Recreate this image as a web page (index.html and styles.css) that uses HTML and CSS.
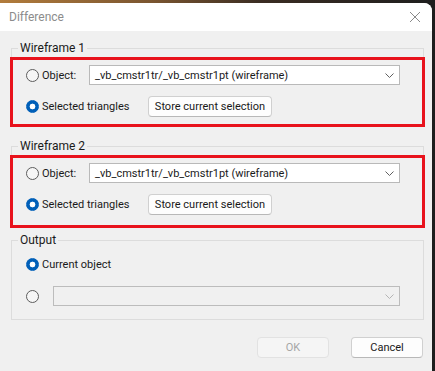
FILE: index.html
```html
<!DOCTYPE html>
<html lang="en">
<head>
    <meta charset="UTF-8">
    <title>Difference</title>
    <link rel="stylesheet" href="styles.css">
</head>
<body>

<div class="window">
    <div class="titlebar">
        <span class="title">Difference</span>
        <svg class="close" width="12" height="12" viewBox="0 0 12 12">
            <path d="M1 1 L11 11 M11 1 L1 11" stroke="#8a8a8a" stroke-width="1" fill="none"/>
        </svg>
    </div>

    <div class="dialog">
        <fieldset class="group">
            <legend>Wireframe 1</legend>
            <div class="mark">
                <div class="row">
                    <label class="radio short"><span class="dot"></span>Object:</label>
                    <div class="combo">
                        <span>_vb_cmstr1tr/_vb_cmstr1pt (wireframe)</span>
                        <svg width="9" height="5" viewBox="0 0 9 5"><path d="M0.5 0.5 L4.5 4.5 L8.5 0.5" stroke="#606060" fill="none"/></svg>
                    </div>
                </div>
                <div class="row">
                    <label class="radio long"><span class="dot on"></span>Selected triangles</label>
                    <button class="btn store">Store current selection</button>
                </div>
            </div>
        </fieldset>

        <fieldset class="group second">
            <legend>Wireframe 2</legend>
            <div class="mark tall">
                <div class="row">
                    <label class="radio short"><span class="dot"></span>Object:</label>
                    <div class="combo">
                        <span>_vb_cmstr1tr/_vb_cmstr1pt (wireframe)</span>
                        <svg width="9" height="5" viewBox="0 0 9 5"><path d="M0.5 0.5 L4.5 4.5 L8.5 0.5" stroke="#606060" fill="none"/></svg>
                    </div>
                </div>
                <div class="row">
                    <label class="radio long"><span class="dot on"></span>Selected triangles</label>
                    <button class="btn store">Store current selection</button>
                </div>
            </div>
        </fieldset>

        <fieldset class="group output">
            <legend>Output</legend>
            <div class="plain">
                <div class="row">
                    <label class="radio"><span class="dot on"></span>Current object</label>
                </div>
                <div class="row">
                    <label class="radio tiny"><span class="dot"></span></label>
                    <div class="combo disabled">
                        <span></span>
                        <svg width="9" height="5" viewBox="0 0 9 5"><path d="M0.5 0.5 L4.5 4.5 L8.5 0.5" stroke="#b4b4b4" fill="none"/></svg>
                    </div>
                </div>
            </div>
        </fieldset>

        <div class="actions">
            <button class="btn wide" disabled>OK</button>
            <button class="btn wide">Cancel</button>
        </div>
    </div>
</div>

</body>
</html>
```

FILE: styles.css
```css
* {
    box-sizing: border-box;
}

body {
    margin: 0;
    height: 371px;
    overflow: hidden;
    background: linear-gradient(to right, #b27c3c 0%, #7a5530 35%, #3a2c22 60%, #1e1e1e 100%);
    font-family: Roboto, "Noto Sans", sans-serif;
    font-size: 11px;
    color: #1a1a1a;
}

.window {
    margin-top: 3px;
    width: 432px;
    height: 368px;
    background-color: #f0f0f0;
    border-radius: 0 8px 0 0;
    overflow: hidden;
}

.titlebar {
    height: 28px;
    background-color: #ffffff;
    display: flex;
    align-items: center;
    justify-content: space-between;
    padding: 0 9px 0 9px;
}

.title {
    color: #8c8c8c;
    font-size: 12px;
}

.close {
    margin-right: 2px;
}

.dialog {
    padding: 9px 8px 0 11px;
}

.group {
    margin: 0;
    padding: 0;
    border: 1px solid #dcdcdc;
    min-width: 0;
}

.group legend {
    margin-left: 6px;
    padding: 0 2px;
    line-height: 16px;
    font-size: 12px;
}

.group.second {
    margin-top: 12px;
}

.group.output {
    margin-top: 5px;
}

.mark {
    border: 3px solid #e8121c;
    margin: 1px -2px -2px -2px;
    padding: 5px 0 7px 13px;
    display: flex;
    flex-direction: column;
    gap: 11px;
}

.mark.tall {
    padding-bottom: 10px;
}

.plain {
    padding: 6px 0 13px 14px;
    display: flex;
    flex-direction: column;
    gap: 12px;
}

.row {
    display: flex;
    align-items: center;
    min-height: 20px;
}

.radio {
    display: flex;
    align-items: center;
    gap: 3px;
    white-space: nowrap;
}

.radio.short {
    width: 63px;
}

.radio.long {
    width: 122px;
}

.radio.tiny {
    width: 27px;
}

.dot {
    width: 13px;
    height: 13px;
    border-radius: 50%;
    border: 1px solid #5c5c5c;
    background-color: #f6f6f6;
    flex: none;
}

.dot.on {
    border-color: #005fb8;
    background: radial-gradient(circle, #ffffff 0 2.6px, #005fb8 3.2px);
}

.combo {
    width: 311px;
    height: 20px;
    background-color: #ffffff;
    border: 1px solid #b9b9b9;
    display: flex;
    align-items: center;
    justify-content: space-between;
    padding: 0 5px 0 5px;
}

.combo.disabled {
    width: 347px;
    background-color: #f0f0f0;
    border-color: #bcbcbc;
}

.btn {
    font-family: inherit;
    font-size: 11px;
    color: #1a1a1a;
    height: 21px;
    padding: 0;
    white-space: nowrap;
    background-color: #fdfdfd;
    border: 1px solid #d0d0d0;
    border-bottom-color: #b8b8b8;
    border-radius: 4px;
}

.btn.store {
    width: 124px;
}

.btn.wide {
    width: 72px;
}

.btn:disabled {
    color: #a6a6a6;
    background-color: #f5f5f5;
    border-color: #e2e2e2;
}

.actions {
    display: flex;
    justify-content: flex-end;
    gap: 22px;
    margin: 17px 1px 0 0;
}
```
